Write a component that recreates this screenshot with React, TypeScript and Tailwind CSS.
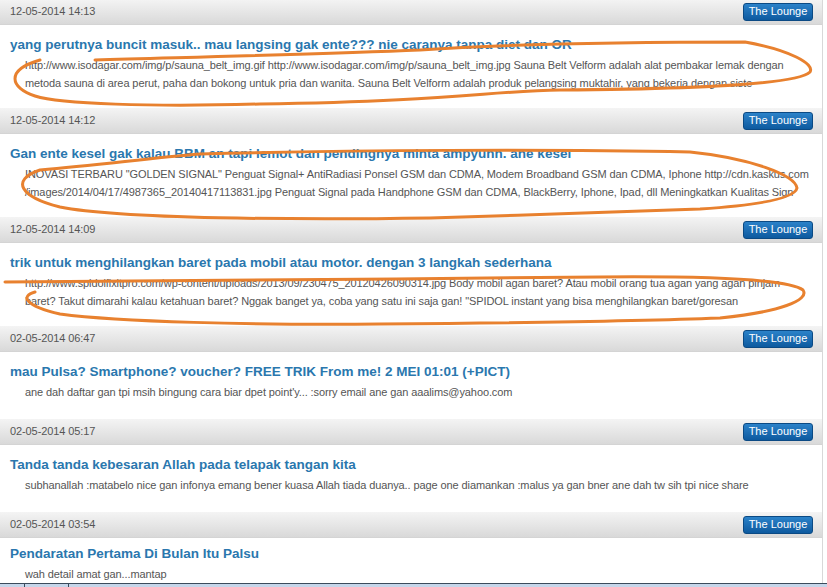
const threads = [
  {
    date: '12-05-2014 14:13',
    title: 'yang perutnya buncit masuk.. mau langsing gak ente??? nie caranya tanpa diet dan OR',
    lines: [
      'http://www.isodagar.com/img/p/sauna_belt_img.gif http://www.isodagar.com/img/p/sauna_belt_img.jpg Sauna Belt Velform adalah alat pembakar lemak dengan',
      'metoda sauna di area perut, paha dan bokong untuk pria dan wanita. Sauna Belt Velform adalah produk pelangsing muktahir, yang bekerja dengan siste',
    ],
  },
  {
    date: '12-05-2014 14:12',
    title: 'Gan ente kesel gak kalau BBM an tapi lemot dan pendingnya minta ampyunn. ane kesel',
    lines: [
      'INOVASI TERBARU "GOLDEN SIGNAL" Penguat Signal+ AntiRadiasi Ponsel GSM dan CDMA, Modem Broadband GSM dan CDMA, Iphone http://cdn.kaskus.com',
      '/images/2014/04/17/4987365_20140417113831.jpg Penguat Signal pada Handphone GSM dan CDMA, BlackBerry, Iphone, Ipad, dll Meningkatkan Kualitas Sign',
    ],
  },
  {
    date: '12-05-2014 14:09',
    title: 'trik untuk menghilangkan baret pada mobil atau motor. dengan 3 langkah sederhana',
    lines: [
      'http://www.spidolfixitpro.com/wp-content/uploads/2013/09/230475_20120426090314.jpg Body mobil agan baret? Atau mobil orang tua agan yang agan pinjam',
      'baret? Takut dimarahi kalau ketahuan baret? Nggak banget ya, coba yang satu ini saja gan! "SPIDOL instant yang bisa menghilangkan baret/goresan',
    ],
  },
  {
    date: '02-05-2014 06:47',
    title: 'mau Pulsa? Smartphone? voucher? FREE TRIK From me! 2 MEI 01:01 (+PICT)',
    lines: ["ane dah daftar gan tpi msih bingung cara biar dpet point'y... :sorry email ane gan aaalims@yahoo.com"],
  },
  {
    date: '02-05-2014 05:17',
    title: 'Tanda tanda kebesaran Allah pada telapak tangan kita',
    lines: ['subhanallah :matabelo nice gan infonya emang bener kuasa Allah tiada duanya.. page one diamankan :malus ya gan bner ane dah tw sih tpi nice share'],
  },
  {
    date: '02-05-2014 03:54',
    title: 'Pendaratan Pertama Di Bulan Itu Palsu',
    lines: ['wah detail amat gan...mantap'],
    tight: true,
  },
];

type Thread = { date: string; title: string; lines: string[]; tight?: boolean };

function ThreadRow({ t }: { t: Thread }) {
  return (
    <div>
      <div className="flex h-[26px] items-center justify-between border-b border-[#d4d4d4] bg-gradient-to-b from-[#f4f4f4] to-[#d9d9d9] pl-[10px] pr-[9px]">
        <span className="text-[11px] tracking-[-0.1px] text-[#555]">{t.date}</span>
        <span className="flex h-[18px] w-[70px] items-center justify-center rounded-[3px] border border-[#0b4a84] bg-gradient-to-b from-[#2b82c9] to-[#0d5a9f] text-[11px] text-white">
          The Lounge
        </span>
      </div>
      <div className={t.tight ? 'bg-white pb-[16px] pt-[5px]' : 'bg-white pb-[16px] pt-[9px]'}>
        <div className="h-[22px] whitespace-nowrap pl-[10px] text-[13.5px] font-bold leading-[22px] text-[#2a77ae]">{t.title}</div>
        <div className="min-h-[20px] pl-[25px] text-[11px] leading-[18px] tracking-[-0.1px] text-[#555]">
          {t.lines.map((l) => (
            <div key={l} className="whitespace-nowrap">
              {l}
            </div>
          ))}
        </div>
      </div>
    </div>
  );
}

export default function App() {
  return (
    <div className="flex h-[587px] w-[827px] flex-col overflow-hidden bg-white font-['Liberation_Sans',Arial,sans-serif]">
      <div className="relative flex-1 overflow-hidden">
        <div className="-mt-px w-[823px] border-r border-[#d8d8d8]">
          {threads.map((t) => (
            <ThreadRow key={t.date} t={t} />
          ))}
        </div>
        {/* hand-drawn highlight marks */}
        <svg className="pointer-events-none absolute left-0 top-0" width="827" height="583" fill="none" stroke="#e8812f" strokeWidth="3" strokeLinecap="round" strokeLinejoin="round">
          <path d="M 95 60 C 200 57, 330 54, 420 50 C 480 46, 600 42, 745 42 C 790 50, 815 64, 810 72 C 798 84, 700 89, 560 90 C 490 91, 450 101, 260 104 C 150 107, 60 104, 35 96 C 10 88, 5 70, 40 60" />
          <path d="M 40 170 C 100 165, 150 158, 200 154 C 350 150, 550 149, 690 152 C 750 158, 795 175, 797 188 C 795 198, 760 205, 700 209 C 600 213, 520 215, 430 218 C 300 220, 120 219, 60 207 C 20 197, 10 180, 40 170" />
          <path d="M 5 282 C 150 281, 400 279, 600 277 C 720 276, 790 280, 803 290 C 810 300, 780 312, 720 318 C 620 322, 500 323, 380 324 C 250 325, 120 322, 60 314 C 25 306, 20 296, 35 292" />
        </svg>
      </div>
      <div className="flex h-[4px] border-t border-[#3b4b5c] bg-[#c6d6ea]">
        <div className="ml-[24px] w-[45px] border-x border-[#3b4b5c]" />
      </div>
    </div>
  );
}
